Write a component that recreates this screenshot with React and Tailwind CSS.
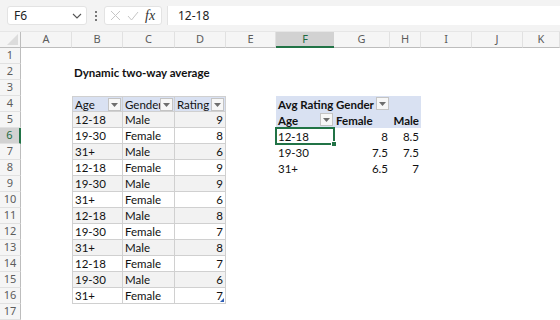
import React from "react";

const COLS = ["A","B","C","D","E","F","G","H","I","J","K"];
const WCLS = ["w-[51px]","w-[51px]","w-[52px]","w-[51px]","w-[50px]","w-[58px]","w-[56px]","w-[31px]","w-[51px]","w-[51px]","w-[37px]"];

const tableData = [
  ["12-18","Male",9],["19-30","Female",8],["31+","Male",6],["12-18","Female",9],
  ["19-30","Male",9],["31+","Female",6],["12-18","Male",8],["19-30","Female",7],
  ["31+","Male",8],["12-18","Female",7],["19-30","Male",6],["31+","Female",7],
];

const pivot = [["12-18","8","8.5"],["19-30","7.5","7.5"],["31+","6.5","7"]];

function DropBtn() {
  return (
    <div className="absolute right-[1px] top-[1px] w-[13px] h-[13px] border border-[#c4c4c4] bg-[#f7f7f7] flex items-center justify-center">
      <svg width="7" height="4" viewBox="0 0 7 4"><path d="M0 0 L7 0 L3.5 4 Z" fill="#6e6e6e" /></svg>
    </div>
  );
}

function cellFor(r, c) {
  if (r === 2 && c === 1) return { text: "Dynamic two-way average", cls: "font-bold", ov: true };
  if (r >= 4 && r <= 16 && c >= 1 && c <= 3) {
    let cls = "border-r border-b border-[#d0d0d0] ";
    if (c === 1) cls += "border-l ";
    if (r === 4) cls += "border-t ";
    if (r === 4) {
      cls += "bg-[#d9e1f2] ";
      const t = ["Age","Gender","Rating"][c-1];
      return { text: t, cls, btn: true };
    }
    const d = tableData[r-5];
    if (r % 2 === 1) cls += "bg-[#f2f2f2] ";
    if (c === 3) return { text: String(d[2]), cls: cls + "justify-end", handle: r === 16 };
    return { text: d[c-1], cls };
  }
  if (r === 4 && c >= 5 && c <= 7) {
    const cls = "bg-[#d9e1f2] font-bold ";
    if (c === 5) return { text: "Avg Rating", cls };
    if (c === 6) return { text: "Gender", cls, btn: true };
    return { text: "", cls };
  }
  if (r === 5 && c >= 5 && c <= 7) {
    const cls = "bg-[#d9e1f2] font-bold ";
    if (c === 5) return { text: "Age", cls, btn: true };
    if (c === 6) return { text: "Female", cls };
    return { text: "Male", cls: cls + "justify-end" };
  }
  if (r >= 6 && r <= 8 && c >= 5 && c <= 7) {
    const p = pivot[r-6];
    if (c === 5) return { text: p[0], cls: "", sel: r === 6, ov: r === 6 };
    return { text: p[c-5], cls: "justify-end" };
  }
  return { text: "", cls: "" };
}

function Row({ r }) {
  const selRow = r === 6;
  return (
    <div className="flex h-[16px]">
      <div className={"w-[21px] shrink-0 h-full flex items-center justify-center text-[11px] border-b border-[#e1e1e1] " + (selRow ? "bg-[#d2d2d2] text-[#1e6b41] border-r-2 border-r-[#217346]" : "bg-[#f5f5f5] text-[#5c5c5c] border-r border-r-[#bdbdbd]")} style={{fontFamily: "'Noto Sans', sans-serif"}}>
        {r}
      </div>
      {COLS.map((col, c) => {
        const info = cellFor(r, c);
        return (
          <div key={col} className={WCLS[c] + " shrink-0 h-full relative flex items-center px-[2px] pt-[1px] text-[11.5px] leading-none text-[#111] whitespace-nowrap " + (info.ov ? "z-10 " : "overflow-hidden ") + info.cls}>
            <span>{info.text}</span>
            {info.btn && <DropBtn />}
            {info.handle && (
              <svg className="absolute right-[1px] bottom-[1px]" width="4" height="4" viewBox="0 0 4 4"><path d="M4 0 L4 4 L0 4 Z" fill="#2f5fb5" /></svg>
            )}
            {info.sel && (
              <div className="absolute left-[-1px] top-[-1px] right-[-1px] bottom-[-1px] border-2 border-[#217346]">
                <div className="absolute right-[-4px] bottom-[-4px] w-[6px] h-[6px] bg-[#217346] border border-white" />
              </div>
            )}
          </div>
        );
      })}
    </div>
  );
}

export default function App() {
  const rows = [];
  for (let r = 1; r <= 17; r++) rows.push(<Row key={r} r={r} />);
  return (
    <div className="w-[560px] h-[320px] overflow-hidden bg-white" style={{fontFamily: "Lato, 'Liberation Sans', sans-serif"}}>
      <div className="h-[32px] bg-[#f3f3f3] flex items-start pt-[6px] pl-[7px] border-b border-[#e6e6e6]">
        <div className="w-[80px] h-[19px] bg-white rounded-[3px] border border-[#e3e3e3] flex items-center justify-between pl-[6px] pr-[4px]">
          <span className="text-[12px] text-[#222]" style={{fontFamily: "'Noto Sans', sans-serif"}}>F6</span>
          <svg width="10" height="6" viewBox="0 0 10 6"><path d="M1 1 L5 5 L9 1" stroke="#555" strokeWidth="1.1" fill="none" /></svg>
        </div>
        <div className="w-[17px] h-[19px] flex flex-col items-center justify-center gap-[2px]">
          <div className="w-[2px] h-[2px] bg-[#777]" />
          <div className="w-[2px] h-[2px] bg-[#777]" />
          <div className="w-[2px] h-[2px] bg-[#777]" />
        </div>
        <div className="w-[58px] h-[19px] bg-white rounded-[3px] border border-[#e3e3e3] flex items-center pl-[5px] gap-[6px]">
          <svg width="11" height="11" viewBox="0 0 11 11"><path d="M1 1 L10 10 M10 1 L1 10" stroke="#c6c6c6" strokeWidth="1" fill="none" /></svg>
          <svg width="12" height="10" viewBox="0 0 12 10"><path d="M1 5 L4.5 9 L11 1" stroke="#c6c6c6" strokeWidth="1" fill="none" /></svg>
          <span className="text-[14px] italic text-[#333] leading-none" style={{fontFamily: "'Liberation Serif', serif"}}>fx</span>
        </div>
        <div className="ml-[5px] flex-1 h-[19px] bg-white border-l border-[#e3e3e3] flex items-center pl-[10px]">
          <span className="text-[12px] text-[#222]" style={{fontFamily: "'Noto Sans', sans-serif"}}>12-18</span>
        </div>
      </div>
      <div className="flex h-[16px]" style={{fontFamily: "'Noto Sans', sans-serif"}}>
        <div className="w-[21px] shrink-0 h-full bg-[#f5f5f5] border-r border-b border-[#bdbdbd] relative">
          <svg className="absolute right-[2px] bottom-[2px]" width="11" height="11" viewBox="0 0 11 11"><path d="M11 0 L11 11 L0 11 Z" fill="#dcdcdc" /></svg>
        </div>
        {COLS.map((col, c) => (
          <div key={col} className={WCLS[c] + " shrink-0 h-full flex items-center justify-center text-[11px] " + (c === 5 ? "bg-[#d2d2d2] text-[#1e6b41] border-b-2 border-[#217346]" : "bg-[#f5f5f5] text-[#5c5c5c] border-r border-r-[#e1e1e1] border-b border-b-[#bdbdbd]")}>
            {col}
          </div>
        ))}
      </div>
      {rows}
    </div>
  );
}
